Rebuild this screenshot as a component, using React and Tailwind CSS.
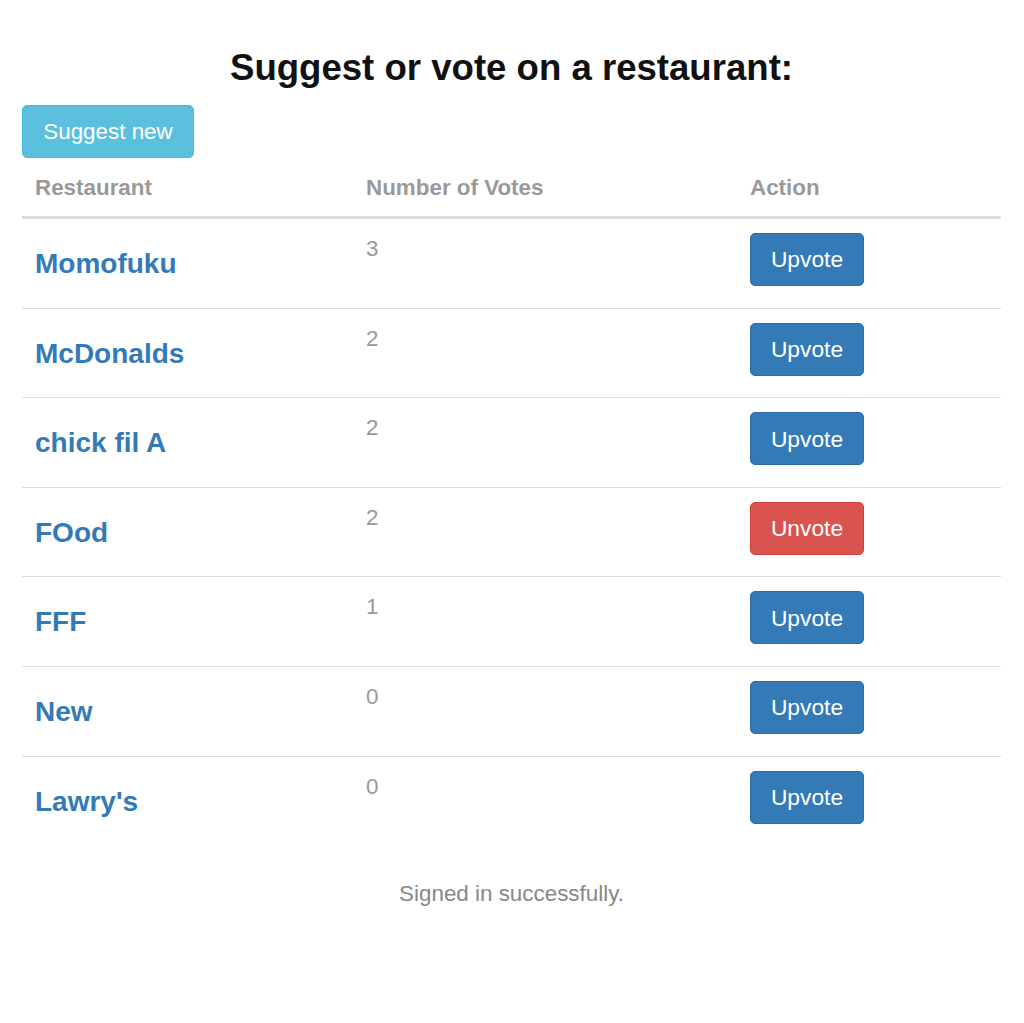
// App.jsx
const restaurants = [
  { name: 'Momofuku',   votes: 3, voted: false },
  { name: 'McDonalds',  votes: 2, voted: false },
  { name: 'chick fil A', votes: 2, voted: false },
  { name: 'FOod',       votes: 2, voted: true },
  { name: 'FFF',        votes: 1, voted: false },
  { name: 'New',        votes: 0, voted: false },
  { name: "Lawry's",    votes: 0, voted: false },
]

// ================================
// Ek row — naam, votes, button
// ================================
function Row({ item, last }) {
  return (
    <div
      className={
        'grid grid-cols-[331px_384px_1fr] h-[89.6px] box-border ' +
        (last ? '' : 'border-b border-[#ddd]')
      }
    >
      <div className="pl-[13px] pt-[29px]">
        <a className="text-[28px] leading-[32px] font-semibold text-[#337ab7]">{item.name}</a>
      </div>
      <div className="pl-[13px] pt-[14px] text-[22.4px] leading-[32px] text-[#999]">
        {item.votes}
      </div>
      <div className="pl-[13px] pt-[14px]">
        {item.voted ? (
          <button className="w-[114px] h-[53px] rounded-[5px] border border-[#d43f3a] bg-[#d9534f] text-white text-[22.8px]">
            Unvote
          </button>
        ) : (
          <button className="w-[114px] h-[53px] rounded-[5px] border border-[#2e6da4] bg-[#337ab7] text-white text-[22.8px]">
            Upvote
          </button>
        )}
      </div>
    </div>
  )
}

export default function App() {
  return (
    <div className="min-h-screen bg-white pl-[22px] pr-[23px] font-['Liberation_Sans',Arial,sans-serif]">

      {/* Title */}
      <h1 className="pt-[48px] text-center font-bold text-[36.6px] leading-[40px] text-[#111]">
        Suggest or vote on a restaurant:
      </h1>

      {/* Suggest button */}
      <button className="mt-[17px] w-[172px] h-[53px] rounded-[5px] border border-[#46b8da] bg-[#5bc0de] text-white text-[22.4px]">
        Suggest new
      </button>

      {/* Table header */}
      <div className="grid grid-cols-[331px_384px_1fr] h-[61px] box-border border-b-[3px] border-[#ddd] pt-[14px] text-[22.4px] leading-[32px] font-bold text-[#999]">
        <div className="pl-[13px]">Restaurant</div>
        <div className="pl-[13px]">Number of Votes</div>
        <div className="pl-[13px]">Action</div>
      </div>

      {/* Rows */}
      {restaurants.map((r, i) => (
        <Row key={r.name} item={r} last={i === restaurants.length - 1} />
      ))}

      {/* Flash message */}
      <p className="mt-[32px] text-center text-[22.4px] leading-[32px] text-[#888]">
        Signed in successfully.
      </p>
    </div>
  )
}
